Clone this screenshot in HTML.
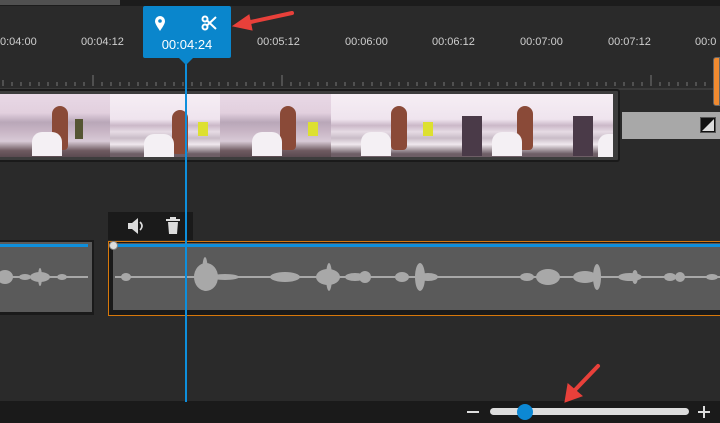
<!DOCTYPE html>
<html><head><meta charset="utf-8"><style>
*{margin:0;padding:0;box-sizing:border-box}
body{width:720px;height:423px;overflow:hidden;background:#2a2a2a;position:relative;font-family:"Liberation Sans",sans-serif}
.a{position:absolute}
.tc{position:absolute;top:36px;color:#cfcfcf;font-size:11px}
.fr{position:absolute;top:94px;height:63px;overflow:hidden;background:linear-gradient(#e8d8e6 0%,#e2d0de 30%,#b9a7b8 45%,#c9b6c6 60%,#d8cad6 75%,#6e5a60 90%,#5a4a50 100%)}
.fr.w{background:linear-gradient(#f6eef4 0%,#efe4ee 40%,#cbb8c8 50%,#e6dbe4 60%,#c9bcc8 70%,#f0e8ee 80%,#6e5e66 95%)}
.hair{position:absolute;width:16px;height:44px;background:#8a4a38;border-radius:8px 8px 4px 4px}
.shirt{position:absolute;width:30px;height:24px;background:#f4f0f4;border-radius:10px 10px 0 0}
</style></head><body>
<div class="a" style="left:0;top:0;width:720px;height:6px;background:#1c1c1c"></div>
<div class="a" style="left:0;top:0;width:120px;height:5px;background:#505050"></div>
<div class="tc" style="left:0">0:04:00</div>
<div class="tc" style="left:81px">00:04:12</div>
<div class="tc" style="left:257px">00:05:12</div>
<div class="tc" style="left:345px">00:06:00</div>
<div class="tc" style="left:432px">00:06:12</div>
<div class="tc" style="left:520px">00:07:00</div>
<div class="tc" style="left:608px">00:07:12</div>
<div class="tc" style="left:695px">00:0</div>
<svg class="a" style="left:0;top:70px" width="720" height="20">
<g stroke="#777" stroke-width="1">
<path d="M3 10v6M12 12v4M21 12v4M30 12v4M39 12v4M48 12v4M57 12v4M66 12v4M75 12v4M84 12v4M93 5v11M102 12v4M111 12v4M120 12v4M129 12v4M138 12v4M147 12v4M156 12v4M165 12v4M174 12v4M183 12v4M192 12v4M201 12v4M210 12v4M219 12v4M228 12v4M237 12v4M246 12v4M255 12v4M264 12v4M273 12v4M282 5v11M291 12v4M300 12v4M309 12v4M318 12v4M327 12v4M336 12v4M345 12v4M354 12v4M363 12v4M372 12v4M381 12v4M390 12v4M399 12v4M408 12v4M417 12v4M426 12v4M435 12v4M444 12v4M453 12v4M462 12v4M471 12v4M480 12v4M489 12v4M498 12v4M507 12v4M516 12v4M525 12v4M534 12v4M543 12v4M552 12v4M561 12v4M570 12v4M579 12v4M588 12v4M597 12v4M606 12v4M615 12v4M624 12v4M633 12v4M642 12v4M651 5v11M660 12v4M669 12v4M678 12v4M687 12v4M696 12v4M705 12v4"/>
</g></svg>
<div class="a" style="left:0;top:88px;width:720px;height:2px;background:#3a3a3a"></div>
<div class="a" style="left:0;top:89px;width:620px;height:73px;background:#3c3c3c;border:2px solid #1a1a1a;border-left:none;border-radius:0 3px 3px 0"></div>
<div class="fr" style="left:0;width:110px"><div class="hair" style="left:52px;top:12px"></div><div class="shirt" style="left:32px;top:38px"></div><div class="a" style="left:75px;top:25px;width:8px;height:20px;background:#553"></div></div>
<div class="fr w" style="left:110px;width:110px"><div class="hair" style="left:62px;top:16px"></div><div class="shirt" style="left:34px;top:40px"></div><div class="a" style="left:88px;top:28px;width:10px;height:14px;background:#dde030"></div></div>
<div class="fr" style="left:220px;width:111px"><div class="hair" style="left:60px;top:12px"></div><div class="shirt" style="left:32px;top:38px"></div><div class="a" style="left:88px;top:28px;width:10px;height:14px;background:#dde030"></div></div>
<div class="fr w" style="left:331px;width:111px"><div class="hair" style="left:60px;top:12px"></div><div class="shirt" style="left:30px;top:38px"></div><div class="a" style="left:92px;top:28px;width:10px;height:14px;background:#dde030"></div></div>
<div class="fr w" style="left:442px;width:111px"><div class="a" style="left:20px;top:22px;width:20px;height:40px;background:#4a3a48"></div><div class="hair" style="left:75px;top:12px"></div><div class="shirt" style="left:50px;top:38px"></div></div>
<div class="fr w" style="left:553px;width:60px"><div class="a" style="left:20px;top:22px;width:20px;height:40px;background:#4a3a48"></div><div class="shirt" style="left:45px;top:40px"></div></div>
<div class="a" style="left:622px;top:112px;width:98px;height:27px;background:#a8a8a8"></div>
<svg class="a" style="left:700px;top:117px" width="16" height="16"><rect x="0.5" y="0.5" width="15" height="15" fill="#111" stroke="#555"/><path d="M14 2V14H2Z" fill="#ddd"/></svg>
<div class="a" style="left:713px;top:57px;width:7px;height:49px;background:#f08a30;border:1px solid #666;border-radius:3px 0 0 3px"></div>
<!-- audio -->
<div class="a" style="left:0;top:240px;width:94px;height:75px;background:#1a1a1a"></div>
<div class="a" style="left:0;top:242px;width:92px;height:70px;background:#5a5a5a"></div>
<div class="a" style="left:0;top:244px;width:88px;height:3px;background:#0e8fdc"></div>
<div class="a" style="left:108px;top:241px;width:612px;height:75px;border:1px solid #d8780a;border-right:none;background:#1a1a1a"></div>
<div class="a" style="left:113px;top:243px;width:607px;height:67px;background:#5a5a5a"></div>
<div class="a" style="left:113px;top:244px;width:607px;height:3px;background:#0e8fdc"></div>
<svg class="a" style="left:0;top:250px" width="720" height="55">
<g fill="#a8a8a8">
<rect x="0" y="26" width="88" height="2"/><rect x="115" y="26" width="605" height="2"/>
<ellipse cx="5" cy="27" rx="8" ry="7"/><ellipse cx="25" cy="27" rx="6" ry="3"/><ellipse cx="40" cy="27" rx="10" ry="5"/><ellipse cx="40" cy="27" rx="2" ry="9"/><ellipse cx="62" cy="27" rx="5" ry="3"/>
<ellipse cx="126" cy="27" rx="5" ry="4"/><ellipse cx="206" cy="27" rx="12" ry="14"/><ellipse cx="205" cy="24" rx="3" ry="17"/><ellipse cx="225" cy="27" rx="14" ry="3"/>
<ellipse cx="285" cy="27" rx="15" ry="5"/><ellipse cx="328" cy="27" rx="12" ry="8"/><ellipse cx="329" cy="27" rx="3" ry="14"/><ellipse cx="355" cy="27" rx="10" ry="4"/>
<ellipse cx="365" cy="27" rx="6" ry="6"/><ellipse cx="402" cy="27" rx="7" ry="5"/><ellipse cx="420" cy="27" rx="5" ry="14"/><ellipse cx="428" cy="27" rx="10" ry="4"/>
<ellipse cx="527" cy="27" rx="7" ry="4"/><ellipse cx="548" cy="27" rx="12" ry="8"/><ellipse cx="585" cy="27" rx="12" ry="6"/><ellipse cx="597" cy="27" rx="4" ry="13"/>
<ellipse cx="630" cy="27" rx="12" ry="4"/><ellipse cx="635" cy="27" rx="3" ry="7"/><ellipse cx="670" cy="27" rx="6" ry="4"/><ellipse cx="680" cy="27" rx="5" ry="5"/><ellipse cx="712" cy="27" rx="6" ry="3"/>
</g></svg>
<div class="a" style="left:109px;top:241px;width:9px;height:9px;border-radius:50%;background:#ddd;border:1px solid #888"></div>
<div class="a" style="left:108px;top:212px;width:85px;height:28px;background:#1a1a1a"></div>
<svg class="a" style="left:126px;top:217px" width="20" height="18"><path d="M2 6h4l6-5v16l-6-5H2z" fill="#ddd"/><path d="M14 5q4 4 0 8" stroke="#ddd" stroke-width="1.6" fill="none"/></svg>
<svg class="a" style="left:165px;top:217px" width="16" height="18"><path d="M1 3h14M6 3V1h4v2" stroke="#ddd" stroke-width="2" fill="none"/><path d="M3 5h10l-1 12H4z" fill="#ddd"/></svg>
<!-- bottom -->
<div class="a" style="left:0;top:401px;width:720px;height:22px;background:#1a1a1a"></div>
<div class="a" style="left:467px;top:411px;width:12px;height:2px;background:#ddd"></div>
<div class="a" style="left:490px;top:408px;width:199px;height:7px;border-radius:4px;background:#ddd"></div>
<div class="a" style="left:517px;top:404px;width:16px;height:16px;border-radius:50%;background:#0c88d4"></div>
<div class="a" style="left:698px;top:411px;width:12px;height:2px;background:#ddd"></div>
<div class="a" style="left:703px;top:406px;width:2px;height:12px;background:#ddd"></div>
<!-- playhead -->
<div class="a" style="left:185px;top:58px;width:2px;height:344px;background:#0e8fdc"></div>
<div class="a" style="left:143px;top:6px;width:88px;height:52px;background:#0a86cc;border-radius:2px"></div>
<div class="a" style="left:178px;top:57px;width:0;height:0;border-left:8px solid transparent;border-right:8px solid transparent;border-top:8px solid #0a86cc"></div>
<svg class="a" style="left:154px;top:16px" width="12" height="16"><path d="M6 15C2 9 1 7 1 5a5 5 0 0 1 10 0c0 2-1 4-5 10z" fill="#fff"/><circle cx="6" cy="5" r="1.8" fill="#0a86cc"/></svg>
<svg class="a" style="left:201px;top:15px" width="16" height="16"><g stroke="#fff" stroke-width="2" fill="none"><circle cx="4" cy="4" r="2.5"/><circle cx="4" cy="12" r="2.5"/><path d="M6 5.5L15 14M6 10.5L15 2"/></g></svg>
<div class="a" style="left:143px;top:37px;width:88px;text-align:center;color:#fff;font-size:13px">00:04:24</div>
<!-- arrows -->
<svg class="a" style="left:0;top:0" width="720" height="423"><g fill="#e8403a" stroke="#e8403a" stroke-linecap="round">
<path d="M292 13L246 23" stroke-width="4"/><path d="M233 26L249 15L252 30Z"/>
<path d="M598 366L575 390" stroke-width="4"/><path d="M565 402L568 384L582 396Z"/>
</g></svg>
</body></html>
